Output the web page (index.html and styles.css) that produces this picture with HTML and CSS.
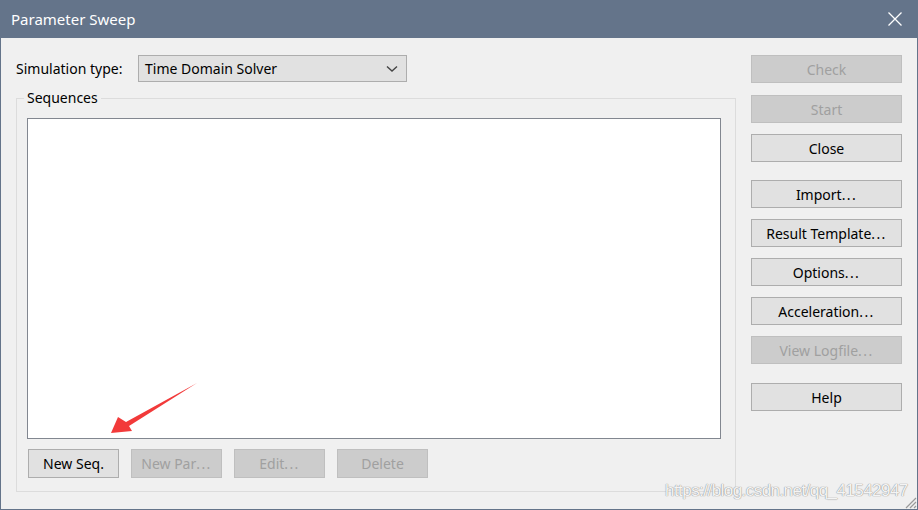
FILE: index.html
```html
<!DOCTYPE html>
<html>
<head>
<meta charset="utf-8">
<title>Parameter Sweep</title>
<link rel="stylesheet" href="styles.css">
</head>
<body>
<div class="window">
  <div class="titlebar">
    <span class="title">Parameter Sweep</span>
    <svg class="close-x" width="16" height="16" viewBox="0 0 16 16"><path d="M1.5 1.5 L14.5 14.5 M14.5 1.5 L1.5 14.5" stroke="#fff" stroke-width="1.3" fill="none"/></svg>
  </div>
  <div class="content">
    <div class="main">
      <div class="sim-row">
        <span class="label">Simulation type:</span>
        <div class="select">
          <span>Time Domain Solver</span>
          <svg class="chev" width="12" height="8" viewBox="0 0 12 8"><path d="M1 1.5 L6 6 L11 1.5" stroke="#444" stroke-width="1.4" fill="none"/></svg>
        </div>
      </div>
      <fieldset class="group">
        <legend>Sequences</legend>
        <div class="listbox"></div>
        <div class="seq-buttons">
          <button class="btn">New Seq.</button>
          <button class="btn disabled">New Par<span class="dots">...</span></button>
          <button class="btn disabled">Edit<span class="dots">...</span></button>
          <button class="btn disabled">Delete</button>
        </div>
      </fieldset>
    </div>
    <div class="side">
      <button class="btn disabled">Check</button>
      <button class="btn disabled">Start</button>
      <button class="btn">Close</button>
      <button class="btn spaced">Import<span class="dots">...</span></button>
      <button class="btn">Result Template<span class="dots">...</span></button>
      <button class="btn">Options<span class="dots">...</span></button>
      <button class="btn">Acceleration<span class="dots">...</span></button>
      <button class="btn disabled">View Logfile<span class="dots">...</span></button>
      <button class="btn spaced2">Help</button>
    </div>
  </div>
  <svg class="arrow" width="918" height="510" viewBox="0 0 918 510"><polygon points="111,433 118,417 126,422 197,383 129,426 132,431" fill="#f23a3a"/></svg>
  <svg class="grip" width="14" height="14" viewBox="0 0 14 14"><path d="M13 3 L3 13 M13 7 L7 13 M13 11 L11 13" stroke="#9a9a9a" stroke-width="1.2"/></svg>
  <div class="watermark">https://blog.csdn.net/qq_41542947</div>
</div>
</body>
</html>
```
FILE: styles.css
```css
* { box-sizing: border-box; }
html, body { margin: 0; padding: 0; }
body {
  width: 918px;
  height: 510px;
  overflow: hidden;
  font-family: "Noto Sans", "Open Sans", sans-serif;
  font-size: 14px;
  color: #000;
}
.window {
  position: relative;
  width: 918px;
  height: 510px;
  background: #f0f0f0;
  border: 1px solid #64748a;
  border-top: none;
  display: flex;
  flex-direction: column;
}
.titlebar {
  height: 38px;
  background: #64748a;
  margin: 0 -1px;
  display: flex;
  align-items: center;
  justify-content: space-between;
  padding: 0 15px 0 11px;
  color: #fff;
}
.title { font-size: 15px; }
.close-x { display: block; }
.content {
  flex: 1;
  display: flex;
  padding: 17px 15px 0 15px;
}
.main {
  width: 720px;
  display: flex;
  flex-direction: column;
}
.sim-row {
  display: flex;
  align-items: center;
  height: 27px;
}
.label { width: 122px; }
.select {
  width: 269px;
  height: 27px;
  background: #e1e1e1;
  border: 1px solid #adadad;
  display: flex;
  align-items: center;
  justify-content: space-between;
  padding: 0 8px 0 6px;
}
.chev { display: block; }
.group {
  margin: 7px 0 0 0;
  padding: 0 14px 14px 10px;
  border: 1px solid #dcdcdc;
  height: 403px;
  display: flex;
  flex-direction: column;
  min-width: 0;
}
.group legend {
  margin-left: -3px;
  padding: 0 3px;
  line-height: 18px;
}
.listbox {
  height: 321px;
  background: #fff;
  border: 1px solid #828790;
  margin-top: 11px;
}
.seq-buttons {
  display: flex;
  gap: 12px;
  margin-top: 10px;
  padding-left: 1px;
}
.seq-buttons .btn { width: 91px; height: 29px; }
.btn {
  font-family: inherit;
  font-size: 14px;
  color: #000;
  background: #e1e1e1;
  border: 1px solid #adadad;
  border-radius: 0;
  padding: 0;
  margin: 0;
  height: 28px;
}
.dots { letter-spacing: 1.4px; }
.btn.disabled {
  background: #cccccc;
  border-color: #bfbfbf;
  color: #a0a0a0;
}
.side {
  margin-left: 15px;
  width: 151px;
  display: flex;
  flex-direction: column;
  gap: 11px;
}
.side .spaced { margin-top: 7px; }
.side .spaced2 { margin-top: 8px; }
.side .btn:nth-child(2) { margin-top: 1px; }
.arrow {
  position: absolute;
  left: -1px;
  top: 0;
  pointer-events: none;
}
.grip {
  position: absolute;
  right: 0;
  bottom: 0;
}
.watermark {
  position: absolute;
  left: 664px;
  top: 481px;
  font-family: "Liberation Sans", Arial, sans-serif;
  font-size: 17px;
  letter-spacing: -0.55px;
  color: rgba(255,255,255,0.92);
  text-shadow: 0 0 1px #8a8a8a, 0 0 1px #9a9a9a;
  white-space: nowrap;
}
```
